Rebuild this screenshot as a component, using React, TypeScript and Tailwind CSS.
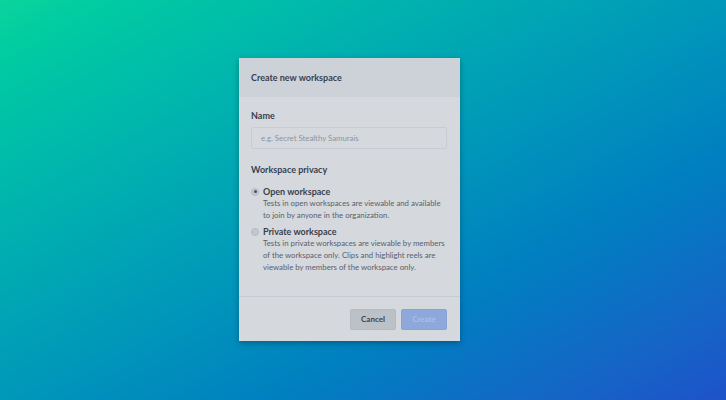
import React, { useState } from 'react';

const App: React.FC = () => {
  const [privacy, setPrivacy] = useState<'open' | 'private'>('open');
  const [name, setName] = useState('');

  return (
    <div
      className="w-[726px] h-[400px] flex items-start justify-start pl-[239px] pt-[58px] bg-gradient-to-br from-[#0bd49c] to-[#1e52c9]"
      style={{ fontFamily: 'Lato, "Open Sans", sans-serif' }}
    >
      <div className="w-[221px] bg-[#d5d9dd] shadow-[0_2px_6px_rgba(0,0,0,0.3)] text-[#38404e]">
        <div className="h-[39px] bg-[#cdd2d8] px-3 flex items-center">
          <h2 className="text-[9px] font-bold">Create new workspace</h2>
        </div>

        <div className="pl-3 pr-[13px] pt-[13px] pb-[23px] border-b border-[#c6cbd1]">
          <label className="block text-[9px] font-bold leading-[12px] mb-[5px]">Name</label>
          <input
            type="text"
            value={name}
            onChange={(e) => setName(e.target.value)}
            placeholder="e.g. Secret Stealthy Samurais"
            className="block w-full h-[22px] px-[9px] text-[7.8px] bg-[#d5d9dd] border border-[#c8cdd3] rounded-[2px] placeholder:text-[#8d939e] focus:outline-none"
          />

          <div className="mt-[14px] text-[9px] font-bold">Workspace privacy</div>

          <div className="mt-[9px] flex flex-col gap-[5px]">
            <label className="flex gap-[4px] cursor-pointer" onClick={() => setPrivacy('open')}>
              <span className="mt-[2px] w-[8px] h-[8px] rounded-full bg-[#c3c8ce] border border-[#b5bbc2] flex items-center justify-center flex-shrink-0">
                {privacy === 'open' && <span className="w-[3px] h-[3px] rounded-full bg-[#4a5160]" />}
              </span>
              <span>
                <span className="block text-[9px] font-bold leading-[11px]">Open workspace</span>
                <span className="block text-[7.8px] leading-[12px] text-[#59606d]">
                  Tests in open workspaces are viewable and available to join by anyone in the organization.
                </span>
              </span>
            </label>
            <label className="flex gap-[4px] cursor-pointer" onClick={() => setPrivacy('private')}>
              <span className="mt-[2px] w-[8px] h-[8px] rounded-full bg-[#c3c8ce] border border-[#b5bbc2] flex items-center justify-center flex-shrink-0">
                {privacy === 'private' && <span className="w-[3px] h-[3px] rounded-full bg-[#4a5160]" />}
              </span>
              <span>
                <span className="block text-[9px] font-bold leading-[11px]">Private workspace</span>
                <span className="block text-[7.8px] leading-[12px] text-[#59606d]">
                  Tests in private workspaces are viewable by members of the workspace only. Clips and highlight reels are viewable by members of the workspace only.
                </span>
              </span>
            </label>
          </div>
        </div>

        <div className="pl-3 pr-[13px] pt-[12px] pb-[11px] flex justify-end gap-[5px]">
          <button className="w-[46px] h-[21px] rounded-[2px] bg-[#bcc1c8] border border-[#b6bbc2] text-[8px] font-bold text-[#3c4352]">
            Cancel
          </button>
          <button className="w-[46px] h-[21px] rounded-[2px] bg-[#8ea8dc] border border-[#8aa3d6] text-[8px] font-bold text-[#abbfe7]">
            Create
          </button>
        </div>
      </div>
    </div>
  );
};

export default App;
